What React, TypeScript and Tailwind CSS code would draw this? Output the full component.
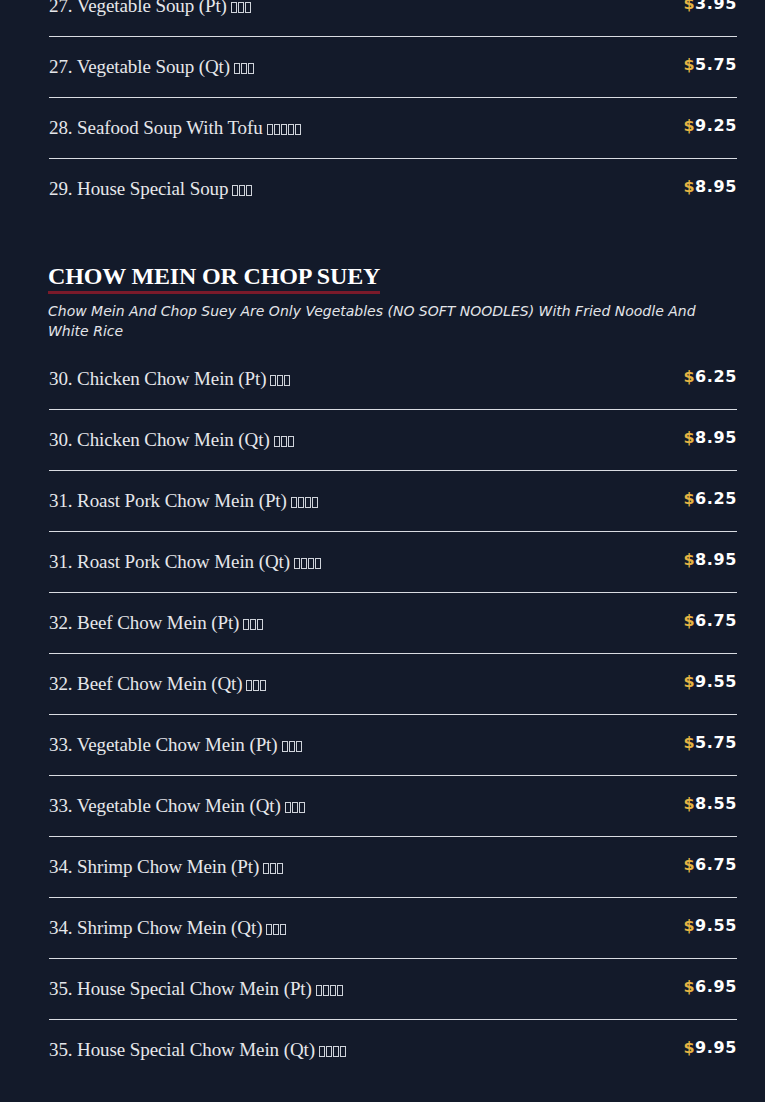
import React from 'react';

type Item = { name: string; boxes: number; price: string };

const soups: Item[] = [
  { name: '27. Vegetable Soup (Pt)', boxes: 3, price: '3.95' },
  { name: '27. Vegetable Soup (Qt)', boxes: 3, price: '5.75' },
  { name: '28. Seafood Soup With Tofu', boxes: 5, price: '9.25' },
  { name: '29. House Special Soup', boxes: 3, price: '8.95' },
];

const chowMein: Item[] = [
  { name: '30. Chicken Chow Mein (Pt)', boxes: 3, price: '6.25' },
  { name: '30. Chicken Chow Mein (Qt)', boxes: 3, price: '8.95' },
  { name: '31. Roast Pork Chow Mein (Pt)', boxes: 4, price: '6.25' },
  { name: '31. Roast Pork Chow Mein (Qt)', boxes: 4, price: '8.95' },
  { name: '32. Beef Chow Mein (Pt)', boxes: 3, price: '6.75' },
  { name: '32. Beef Chow Mein (Qt)', boxes: 3, price: '9.55' },
  { name: '33. Vegetable Chow Mein (Pt)', boxes: 3, price: '5.75' },
  { name: '33. Vegetable Chow Mein (Qt)', boxes: 3, price: '8.55' },
  { name: '34. Shrimp Chow Mein (Pt)', boxes: 3, price: '6.75' },
  { name: '34. Shrimp Chow Mein (Qt)', boxes: 3, price: '9.55' },
  { name: '35. House Special Chow Mein (Pt)', boxes: 4, price: '6.95' },
  { name: '35. House Special Chow Mein (Qt)', boxes: 4, price: '9.95' },
];

// missing-glyph boxes, as the CJK names render without a font
const Tofu = ({ count }: { count: number }) => (
  <span className="inline-flex gap-[1px] ml-[4px] align-[-1px]">
    {Array.from({ length: count }).map((_, i) => (
      <span key={i} className="inline-block w-[6px] h-[11px] border border-[#cfd3da]" />
    ))}
  </span>
);

const MenuRow = ({ item, last }: { item: Item; last: boolean }) => (
  <div className={`flex items-start justify-between py-[18px] ${last ? '' : 'border-b border-[#d9dce2]'}`}>
    <span className="font-['Liberation_Serif',serif] text-[19px] leading-[24px] text-[#e6e7ea] tracking-[-0.1px]">
      {item.name}
      <Tofu count={item.boxes} />
    </span>
    <span className="font-['DejaVu_Sans',sans-serif] font-bold text-[16px] leading-[18px] mt-[1px] text-white tracking-[0.6px]">
      <span className="text-[#e5b443]">$</span>
      {item.price}
    </span>
  </div>
);

export default function App() {
  return (
    <div className="min-h-[1102px] bg-[#131a2a] pl-[49px] pr-[28px] overflow-hidden">
      <div className="-mt-[24px]">
        {soups.map((item, i) => (
          <MenuRow key={item.name} item={item} last={i === soups.length - 1} />
        ))}
      </div>

      <div className="mt-[43px]">
        <h2 className="-ml-[1px] inline-block font-['Liberation_Serif',serif] font-bold text-[24px] leading-[28px] text-white border-b-[3px] border-[#7a1a2a] pb-[1px] tracking-[-0.15px]">
          CHOW MEIN OR CHOP SUEY
        </h2>
        <p className="-ml-[1px] mt-[7px] font-['DejaVu_Sans',sans-serif] italic text-[14px] leading-[20px] text-[#e3e5e9] pr-[30px]">
          Chow Mein And Chop Suey Are Only Vegetables (NO SOFT NOODLES) With Fried Noodle And White Rice
        </p>
      </div>

      <div className="mt-[8px]">
        {chowMein.map((item, i) => (
          <MenuRow key={item.name} item={item} last={i === chowMein.length - 1} />
        ))}
      </div>
    </div>
  );
}
